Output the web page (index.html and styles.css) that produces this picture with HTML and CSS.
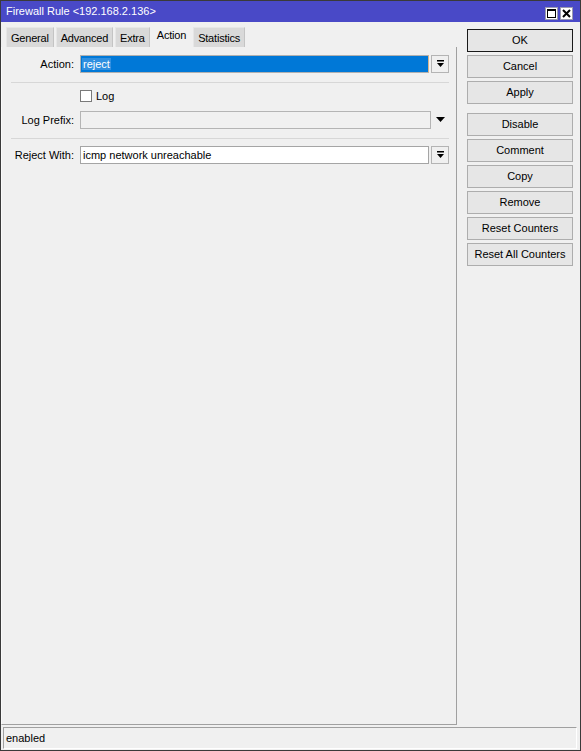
FILE: index.html
```html
<!DOCTYPE html>
<html>
<head>
    <meta charset="UTF-8">
    <title>Firewall Rule</title>
    <link rel="stylesheet" href="styles.css">
</head>
<body>
    <div class="window">
        <div class="titleBar">
            <span class="title">Firewall Rule &lt;192.168.2.136&gt;</span>
            <div class="winButtons">
                <span class="winBtn">
                    <svg width="11" height="11" viewBox="0 0 11 11"><rect x="1.5" y="1.5" width="8" height="8" fill="none" stroke="#000" stroke-width="1"/><rect x="1" y="1" width="9" height="2" fill="#000"/></svg>
                </span>
                <span class="winBtn">
                    <svg width="11" height="11" viewBox="0 0 11 11"><path d="M2 2 L9 9 M9 2 L2 9" stroke="#000" stroke-width="2"/></svg>
                </span>
            </div>
        </div>

        <div class="content">
            <div class="mainArea">
                <div class="tabs">
                    <div class="tab">General</div>
                    <div class="tab">Advanced</div>
                    <div class="tab">Extra</div>
                    <div class="tab active">Action</div>
                    <div class="tab">Statistics</div>
                </div>
                <div class="panel">
                    <div class="row">
                        <span class="label">Action:</span>
                        <div class="field selected"><span class="selText">reject</span></div>
                        <div class="dropBtn">
                            <svg width="8" height="8" viewBox="0 0 8 8"><rect x="0" y="0" width="7" height="1.5" fill="#000"/><polygon points="0,3 7,3 3.5,7" fill="#000"/></svg>
                        </div>
                    </div>
                    <div class="separator"></div>
                    <div class="row">
                        <span class="label"></span>
                        <span class="checkBox"></span>
                        <span class="checkText">Log</span>
                    </div>
                    <div class="row spaced">
                        <span class="label">Log Prefix:</span>
                        <div class="field disabled"></div>
                        <div class="dropArrow">
                            <svg width="9" height="6" viewBox="0 0 9 6"><polygon points="0,0 9,0 4.5,5" fill="#000"/></svg>
                        </div>
                    </div>
                    <div class="separator last"></div>
                    <div class="row">
                        <span class="label">Reject With:</span>
                        <div class="field">icmp network unreachable</div>
                        <div class="dropBtn">
                            <svg width="8" height="8" viewBox="0 0 8 8"><rect x="0" y="0" width="7" height="1.5" fill="#000"/><polygon points="0,3 7,3 3.5,7" fill="#000"/></svg>
                        </div>
                    </div>
                </div>
            </div>

            <div class="sideButtons">
                <div class="button default">OK</div>
                <div class="button">Cancel</div>
                <div class="button">Apply</div>
                <div class="button groupStart">Disable</div>
                <div class="button">Comment</div>
                <div class="button">Copy</div>
                <div class="button">Remove</div>
                <div class="button">Reset Counters</div>
                <div class="button">Reset All Counters</div>
            </div>
        </div>

        <div class="statusBar">
            <div class="status">enabled</div>
        </div>
    </div>
</body>
</html>
```

FILE: styles.css
```css
body {
    margin: 0;
    font-family: "Liberation Sans", Arial, sans-serif;
    font-size: 11px;
    color: #000;
}
.window {
    width: 581px;
    height: 751px;
    box-sizing: border-box;
    border: 1px solid #3a3a3a;
    background: #f0f0f0;
    display: flex;
    flex-direction: column;
}

/* title bar */
.titleBar {
    height: 21px;
    background: #4949c7;
    display: flex;
    align-items: flex-start;
    justify-content: space-between;
    flex-shrink: 0;
}
.title {
    color: #fff;
    padding-left: 5px;
    line-height: 21px;
}
.winButtons {
    display: flex;
    gap: 2px;
    margin-top: 6px;
    margin-right: 7px;
}
.winBtn {
    width: 13px;
    height: 13px;
    box-sizing: border-box;
    background: #fff;
    border: 1px solid #9a9ab0;
    display: flex;
    align-items: center;
    justify-content: center;
}

/* body */
.content {
    flex: 1;
    display: flex;
    min-height: 0;
}
.mainArea {
    width: 456px;
    display: flex;
    flex-direction: column;
}
.tabs {
    display: flex;
    gap: 2px;
    height: 22px;
    margin-top: 3px;
    padding-left: 5px;
    align-items: flex-end;
}
.tab {
    height: 20px;
    line-height: 20px;
    padding: 0 4px;
    letter-spacing: -0.2px;
    background: #d9d9d9;
    border-top: 1px solid #e6e6e6;
    border-left: 1px solid #e6e6e6;
    border-right: 1px solid #c4c4c4;
    box-sizing: border-box;
}
.tab.active {
    height: 22px;
    line-height: 19px;
    background: #f0f0f0;
    border-color: #f0f0f0;
}
.panel {
    flex: 1;
    border-left: 1px solid #fafafa;
    border-right: 1px solid #a0a0a0;
    border-bottom: 1px solid #a0a0a0;
    padding: 8px 7px 0 0;
}
.row {
    display: flex;
    align-items: center;
    height: 18px;
}
.row.spaced {
    margin-top: 6px;
}
.label {
    width: 72px;
    margin-right: 6px;
    text-align: right;
    flex-shrink: 0;
}
.field {
    flex: 1;
    height: 18px;
    box-sizing: border-box;
    border: 1px solid #a5a5a5;
    background: #fff;
    padding-left: 2px;
    line-height: 16px;
    white-space: nowrap;
}
.field.selected {
    background: #0078d7;
    border-color: #b0b0b0;
    border-right-color: #d9b48a;
    padding-left: 1px;
}
.selText {
    color: #fff;
    background: #2f8fe0;
    padding: 0 1px;
}
.field.disabled {
    background: #f0f0f0;
    border-color: #b4b4b4;
}
.dropBtn {
    width: 18px;
    height: 18px;
    box-sizing: border-box;
    margin-left: 2px;
    border: 1px solid #b4b4b4;
    background: #f0f0f0;
    display: flex;
    align-items: center;
    justify-content: center;
    padding-left: 1px;
}
.dropArrow {
    width: 18px;
    height: 18px;
    display: flex;
    align-items: center;
    justify-content: center;
}
.separator {
    height: 1px;
    background: #d7d7d7;
    margin: 9px 0 4px 9px;
}
.separator.last {
    margin-bottom: 7px;
}
.checkBox {
    width: 12px;
    height: 12px;
    box-sizing: border-box;
    border: 1px solid #7a7a7a;
    background: #fff;
    margin-right: 4px;
}

/* right hand buttons */
.sideButtons {
    display: flex;
    flex-direction: column;
    gap: 3px;
    padding: 7px 0 0 10px;
}
.button {
    width: 106px;
    height: 23px;
    box-sizing: border-box;
    border: 1px solid #adadad;
    background: #e6e6e6;
    text-align: center;
    line-height: 21px;
}
.button.default {
    border-color: #1a1a1a;
}
.button.groupStart {
    margin-top: 6px;
}

/* status bar */
.statusBar {
    height: 25px;
    flex-shrink: 0;
    padding: 2px 2px 1px 2px;
    box-sizing: border-box;
}
.status {
    height: 22px;
    box-sizing: border-box;
    border-top: 1px solid #a0a0a0;
    border-left: 1px solid #a0a0a0;
    border-right: 1px solid #fff;
    border-bottom: 1px solid #fff;
    margin-right: 1px;
    padding-left: 2px;
    line-height: 20px;
}
```
